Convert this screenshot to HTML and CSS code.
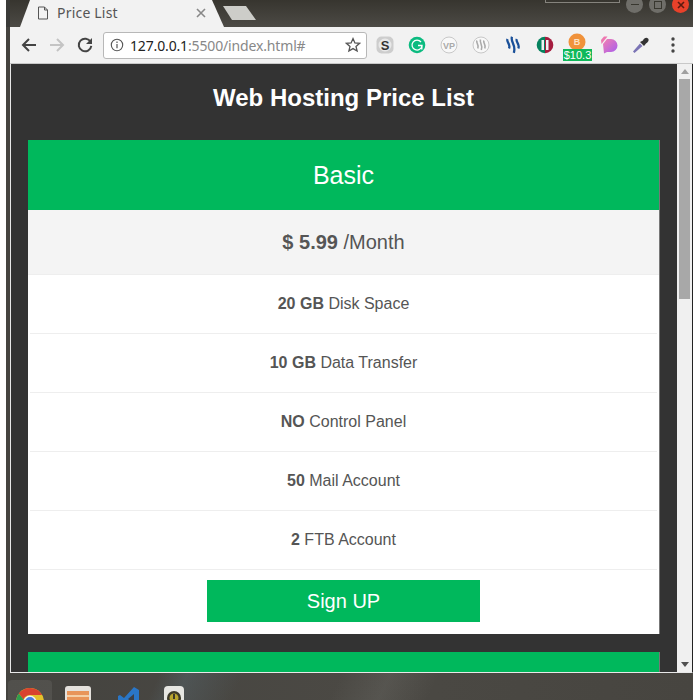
FILE: index.html
```html
<!DOCTYPE html>
<html lang="en">
  <head>
    <meta charset="UTF-8" />
    <title>Price List</title>
    <link rel="stylesheet" href="styles.css">
  </head>
  <body>
    <div class="desktop">
      <div class="titlebar">
        <div class="tab">
          <svg class="tab-icon" width="12" height="14" viewBox="0 0 12 14"><path d="M1.500 1h6l3 3v9h-9z M7.500 1v3h3" fill="none" stroke="#555" stroke-width="1"/></svg>
          <span class="tab-title">Price List</span>
          <svg class="tab-close" width="10" height="10" viewBox="0 0 10 10"><path d="M1 1l8 8M9 1l-8 8" stroke="#888" stroke-width="1.600"/></svg>
        </div>
        <div class="newtab"></div>
        <div class="tooltip-edge"></div>
        <div class="winbtns">
          <span class="winbtn"><i class="min"></i></span>
          <span class="winbtn"><i class="max"></i></span>
          <span class="winbtn close">
            <svg width="10" height="10" viewBox="0 0 10 10"><path d="M2 2l6 6M8 2l-6 6" stroke="#5c1a10" stroke-width="1.600"/></svg>
          </span>
        </div>
      </div>

      <div class="toolbar">
        <svg class="navicon" width="18" height="18" viewBox="0 0 18 18"><path d="M16 9H3M9 3L3 9l6 6" fill="none" stroke="#444" stroke-width="2"/></svg>
        <svg class="navicon" width="18" height="18" viewBox="0 0 18 18"><path d="M2 9h13M9 3l6 6-6 6" fill="none" stroke="#c4c4c4" stroke-width="2"/></svg>
        <svg class="navicon" width="18" height="18" viewBox="0 0 18 18"><path d="M14.600 6A6.300 6.300 0 1 0 15.300 9.800" fill="none" stroke="#444" stroke-width="2"/><path d="M16 2v6h-6z" fill="#444"/></svg>
        <div class="omnibox">
          <svg width="14" height="14" viewBox="0 0 14 14"><circle cx="7" cy="7" r="5.700" fill="none" stroke="#555" stroke-width="1.100"/><path d="M7 6v4.200M7 3.600v1.300" stroke="#555" stroke-width="1.200"/></svg>
          <span class="url"><b>127.0.0.1</b>:5500/index.html#</span>
          <svg class="star" width="16" height="16" viewBox="0 0 16 16"><path d="M8 1.600l1.900 4.300 4.700.4-3.600 3.100 1.100 4.600L8 11.600l-4.100 2.400L5 9.400 1.400 6.300l4.700-.4z" fill="none" stroke="#555" stroke-width="1.300"/></svg>
        </div>
        <div class="extensions">
          <span class="ext"><svg width="18" height="18" viewBox="0 0 18 18"><rect x="0.500" y="0.500" width="17" height="17" rx="5" fill="#cdcdcd"/><circle cx="9" cy="9" r="6.500" fill="#e8e8e8"/><text x="9" y="13.500" text-anchor="middle" class="ext-s">S</text></svg></span>
          <span class="ext"><svg width="18" height="18" viewBox="0 0 18 18"><circle cx="9" cy="9" r="8.300" fill="#0cbb80"/><path d="M13 6A5 5 0 1 0 14 9.500H10M14 9.500l-.2 4" fill="none" stroke="#fff" stroke-width="1.300"/></svg></span>
          <span class="ext"><svg width="18" height="18" viewBox="0 0 18 18"><circle cx="9" cy="9" r="8" fill="#f8f8f8" stroke="#c8c8c8"/><text x="9" y="12.600" text-anchor="middle" class="ext-vp">VP</text></svg></span>
          <span class="ext"><svg width="18" height="18" viewBox="0 0 18 18"><circle cx="9" cy="9" r="8" fill="#f8f8f8" stroke="#c8c8c8"/><path d="M5 4.500c-1.500 2.500 2.500 4 .8 8M8.500 3.500c-1.500 3.500 3 5.500.8 10.500M12 4.500c-1.500 2.500 2.500 4 .8 8" fill="none" stroke="#aaa" stroke-width="1.600"/></svg></span>
          <span class="ext"><svg width="18" height="18" viewBox="0 0 18 18"><path d="M3.500 3c-1.500 3 3.500 5 1.500 9.500M8 .8c-2 5 4.500 8 1.800 16M12.800 3c-1.500 3 3.500 5 1.500 9.500" fill="none" stroke="#1a5099" stroke-width="2.300"/></svg></span>
          <span class="ext"><svg width="18" height="18" viewBox="0 0 18 18"><path d="M9 .7a8.300 8.300 0 0 0 0 16.600z" fill="#06835f"/><path d="M9 .7a8.300 8.300 0 0 1 0 16.600z" fill="#a51c3f"/><rect x="5.500" y="4" width="2.500" height="10" fill="#f2f2f2"/><rect x="10" y="4" width="2.500" height="10" fill="#f2f2f2"/></svg></span>
          <span class="ext ext-btc">
            <svg width="18" height="18" viewBox="0 0 18 18"><circle cx="9" cy="9" r="8.500" fill="#f0923b"/><text x="9" y="12" text-anchor="middle" class="ext-b">B</text></svg>
            <span class="badge">$10.3</span>
          </span>
          <span class="ext"><svg width="18" height="18" viewBox="0 0 18 18"><defs><linearGradient id="pat" x1="0" y1="0" x2="1" y2="1"><stop offset="0" stop-color="#f47fb0"/><stop offset="1" stop-color="#a45cf0"/></linearGradient></defs><path d="M3 8l4-5h4a6.500 6.500 0 0 1 0 13H7l-3 1.500z" fill="url(#pat)"/><path d="M1 4l3-3.500h3.500L1.500 8z" fill="#ee77b0"/></svg></span>
          <span class="ext"><svg width="18" height="18" viewBox="0 0 18 18"><path d="M2.500 17l-1.500-1.500 7-8 2.500 2.500z" fill="#7b74b5"/><path d="M8 6l4 4 2-2.500c2-1 3.500-3.500 2-5s-4-.5-5 2z" fill="#333"/></svg></span>
          <span class="ext"><svg width="4" height="16" viewBox="0 0 4 16"><circle cx="2" cy="2" r="1.700" fill="#444"/><circle cx="2" cy="8" r="1.700" fill="#444"/><circle cx="2" cy="14" r="1.700" fill="#444"/></svg></span>
        </div>
      </div>

      <div class="viewport">
        <main class="page">
          <h1>Web Hosting Price List</h1>

          <section class="plan">
            <h2 class="plan-name">Basic</h2>
            <p class="plan-price"><b>$ 5.99</b> /Month</p>
            <ul class="features">
              <li><b>20 GB</b> Disk Space</li>
              <li><b>10 GB</b> Data Transfer</li>
              <li><b>NO</b> Control Panel</li>
              <li><b>50</b> Mail Account</li>
              <li><b>2</b> FTB Account</li>
            </ul>
            <div class="plan-foot"><a class="signup" href="#">Sign UP</a></div>
          </section>

          <section class="plan">
            <div class="plan-name"></div>
          </section>
        </main>
        <div class="scrollbar">
          <i class="arrow up"></i>
          <div class="track"><div class="thumb"></div></div>
          <i class="arrow down"></i>
        </div>
      </div>

      <div class="dock">
        <div class="dock-item active">
          <svg width="28" height="28" viewBox="0 0 28 28"><circle cx="14" cy="14" r="14" fill="#e2c22c"/><path d="M14 0a14 14 0 0 1 12.100 7H14a7 7 0 0 0-6.500 4.500L2.800 5.600A14 14 0 0 1 14 0z" fill="#d8432f"/><path d="M2.800 5.600A14 14 0 0 0 8 26.600L13 18a7 7 0 0 1-5.500-6.500z" fill="#2f9e4f"/><circle cx="14" cy="14" r="6.500" fill="#f2f2f2"/><circle cx="14" cy="14" r="5" fill="#4a7fe0"/></svg>
        </div>
        <div class="dock-item files">
          <svg width="26" height="26" viewBox="0 0 26 26"><rect width="26" height="26" rx="3" fill="#e4e1dc"/><rect x="2" y="5" width="22" height="12" fill="#e8955a"/><rect x="2" y="9" width="22" height="2" fill="#f4cfa6"/></svg>
        </div>
        <div class="dock-item code">
          <svg width="22" height="26" viewBox="0 0 22 26"><path d="M16 0l5 3v20l-5 3L6 15l-4 3-2-1v-8l2-1 4 3z" fill="#2a76c6"/><path d="M16 7l-6 5 6 5z" fill="#3d4045"/></svg>
        </div>
        <div class="dock-item lock">
          <svg width="20" height="26" viewBox="0 0 20 26"><rect width="20" height="26" rx="4" fill="#e6e6e2"/><circle cx="10" cy="12" r="7" fill="#3d3a2a"/><circle cx="10" cy="12" r="4.500" fill="#b8a52e"/><rect x="9" y="8" width="2" height="5" fill="#3d3a2a"/></svg>
        </div>
      </div>
    </div>
  </body>
</html>
```

FILE: styles.css
```css
* {
  box-sizing: border-box;
}

html,
body {
  height: 100%;
  margin: 0;
  overflow: hidden;
  background-color: white;
  font-family: "Liberation Sans", Arial, sans-serif;
}

.desktop {
  display: flex;
  flex-direction: column;
  width: 687px;
  height: 700px;
  margin-left: 6px;
  background-color: #45433f;
}

/* window title bar */
.titlebar {
  position: relative;
  display: flex;
  align-items: flex-end;
  flex: none;
  height: 27px;
  padding-left: 10px;
  background: linear-gradient(#37352f, #4c4a45);
  border-left: 4px solid #3a3a38;
}

.tab {
  display: flex;
  align-items: center;
  flex: none;
  width: 204px;
  height: 27px;
  padding: 0 18px 2px 17px;
  background-color: #f2f2f2;
  clip-path: polygon(10px 0, 192px 0, 204px 100%, 0 100%);
}

.tab-title {
  margin-left: 8px;
  font-family: "Noto Sans", sans-serif;
  font-size: 14px;
  letter-spacing: 0.2px;
  color: #555;
}

.tab-close {
  margin-left: auto;
}

.newtab {
  width: 33px;
  height: 14px;
  margin: 0 0 7px -1px;
  background-color: #cdcdc9;
  clip-path: polygon(0 0, 23px 0, 33px 100%, 9px 100%);
}

.tooltip-edge {
  position: absolute;
  top: 0;
  left: 535px;
  width: 75px;
  height: 3px;
  border: 1px solid #85837d;
  border-top: none;
}

.winbtns {
  display: flex;
  gap: 6px;
  align-self: flex-start;
  margin-top: -4px;
  margin-left: auto;
  margin-right: 4px;
}

.winbtn {
  display: flex;
  align-items: center;
  justify-content: center;
  width: 17px;
  height: 17px;
  border-radius: 50%;
  background-color: #6f6e69;
}

.winbtn.close {
  background-color: #e8412a;
}

.min {
  width: 8px;
  height: 1px;
  background-color: #38372f;
}

.max {
  width: 8px;
  height: 8px;
  border: 1px solid #38372f;
}

/* browser toolbar */
.toolbar {
  display: flex;
  align-items: center;
  flex: none;
  height: 37px;
  margin-left: 4px;
  padding-left: 10px;
  background-color: #f2f2f2;
  border-bottom: 1px solid #c8c8c8;
}

.navicon {
  margin-right: 10px;
}

.navicon:nth-child(3) {
  margin-right: 9px;
}

.omnibox {
  display: flex;
  align-items: center;
  gap: 6px;
  width: 264px;
  height: 27px;
  padding: 0 5px 0 6px;
  background-color: white;
  border: 1px solid #b8b8b8;
  border-radius: 3px;
}

.url {
  font-family: "Noto Sans", sans-serif;
  font-size: 14px;
  letter-spacing: -0.15px;
  color: #888;
}

.url b {
  font-weight: normal;
  color: #222;
}

.star {
  margin-left: auto;
}

.extensions {
  display: flex;
  margin-left: 2px;
}

.ext {
  position: relative;
  display: flex;
  align-items: center;
  justify-content: center;
  width: 32px;
  height: 30px;
}

.ext-s {
  font: bold 13px "Liberation Sans", sans-serif;
  fill: #333;
}

.ext-vp {
  font: bold 9px "Liberation Sans", sans-serif;
  fill: #aaa;
}

.ext-b {
  font: bold 9px "Liberation Sans", sans-serif;
  fill: #fde2c4;
}

.ext-btc svg {
  margin-top: -7px;
}

.badge {
  position: absolute;
  left: 2px;
  bottom: -1px;
  width: 29px;
  height: 12px;
  font-size: 11px;
  line-height: 12px;
  text-align: center;
  color: white;
  background-color: #0fb85a;
}

/* page area */
.viewport {
  display: flex;
  flex: none;
  height: 609px;
  margin-left: 4px;
  background-color: white;
  border-left: 1px solid #e8e8e8;
  border-bottom: 1px solid #e8e8e8;
  border-right: 1px solid #222;
}

.page {
  flex: 1;
  padding: 0 18px 0 17px;
  overflow: hidden;
  background-color: #333;
}

h1 {
  margin: 0;
  padding: 19px 0 28px;
  font-size: 24px;
  line-height: 29px;
  text-align: center;
  color: white;
}

.plan {
  margin-bottom: 18px;
  background-color: white;
  text-align: center;
  color: #555;
  box-shadow: 1px 0 0 #777;
}

.plan-name {
  margin: 0;
  height: 70px;
  font-size: 25px;
  font-weight: normal;
  line-height: 70px;
  color: white;
  background-color: #00b85c;
}

.plan-price {
  margin: 0;
  height: 65px;
  font-size: 20px;
  line-height: 64px;
  background-color: #f4f4f4;
  border-bottom: 1px solid #eee;
}

.features {
  margin: 0;
  padding: 0;
  list-style: none;
}

.features li {
  height: 59px;
  margin: 0 2px;
  font-size: 16px;
  line-height: 58px;
  border-bottom: 1px solid #eee;
}

.plan-foot {
  padding: 10px 0 12px;
}

.signup {
  display: block;
  width: 273px;
  height: 42px;
  margin: 0 auto;
  font-size: 20px;
  line-height: 42px;
  text-decoration: none;
  color: white;
  background-color: #00b85c;
}

/* scrollbar */
.scrollbar {
  display: flex;
  flex-direction: column;
  align-items: center;
  flex: none;
  width: 15px;
  background-color: #f0f0f0;
}

.arrow {
  flex: none;
  width: 0;
  height: 0;
  margin: 5px 0;
  border-left: 4px solid transparent;
  border-right: 4px solid transparent;
}

.arrow.up {
  border-bottom: 5px solid #a0a0a0;
}

.arrow.down {
  border-top: 5px solid #505050;
}

.track {
  flex: 1;
  width: 100%;
  padding: 0 2px;
}

.thumb {
  width: 11px;
  height: 220px;
  background-color: #a8a8a8;
}

/* launcher */
.dock {
  display: flex;
  align-items: flex-start;
  flex: 1;
  overflow: hidden;
  padding-left: 2px;
  background:
    linear-gradient(115deg, transparent 22%, rgba(90, 110, 120, 0.35) 26%, transparent 34%),
    linear-gradient(115deg, transparent 48%, rgba(120, 120, 115, 0.25) 55%, transparent 62%),
    linear-gradient(90deg, #44433f, #4b4944 50%, #474540);
}

.dock-item {
  flex: none;
  line-height: 0;
}

.active {
  width: 44px;
  height: 40px;
  margin-top: 7px;
  padding: 8px 0 0 8px;
  border-radius: 4px;
  background-color: rgba(255, 255, 255, 0.07);
}

.files {
  margin: 13px 0 0 13px;
}

.code {
  margin: 14px 0 0 27px;
}

.lock {
  margin: 13px 0 0 24px;
}
```
